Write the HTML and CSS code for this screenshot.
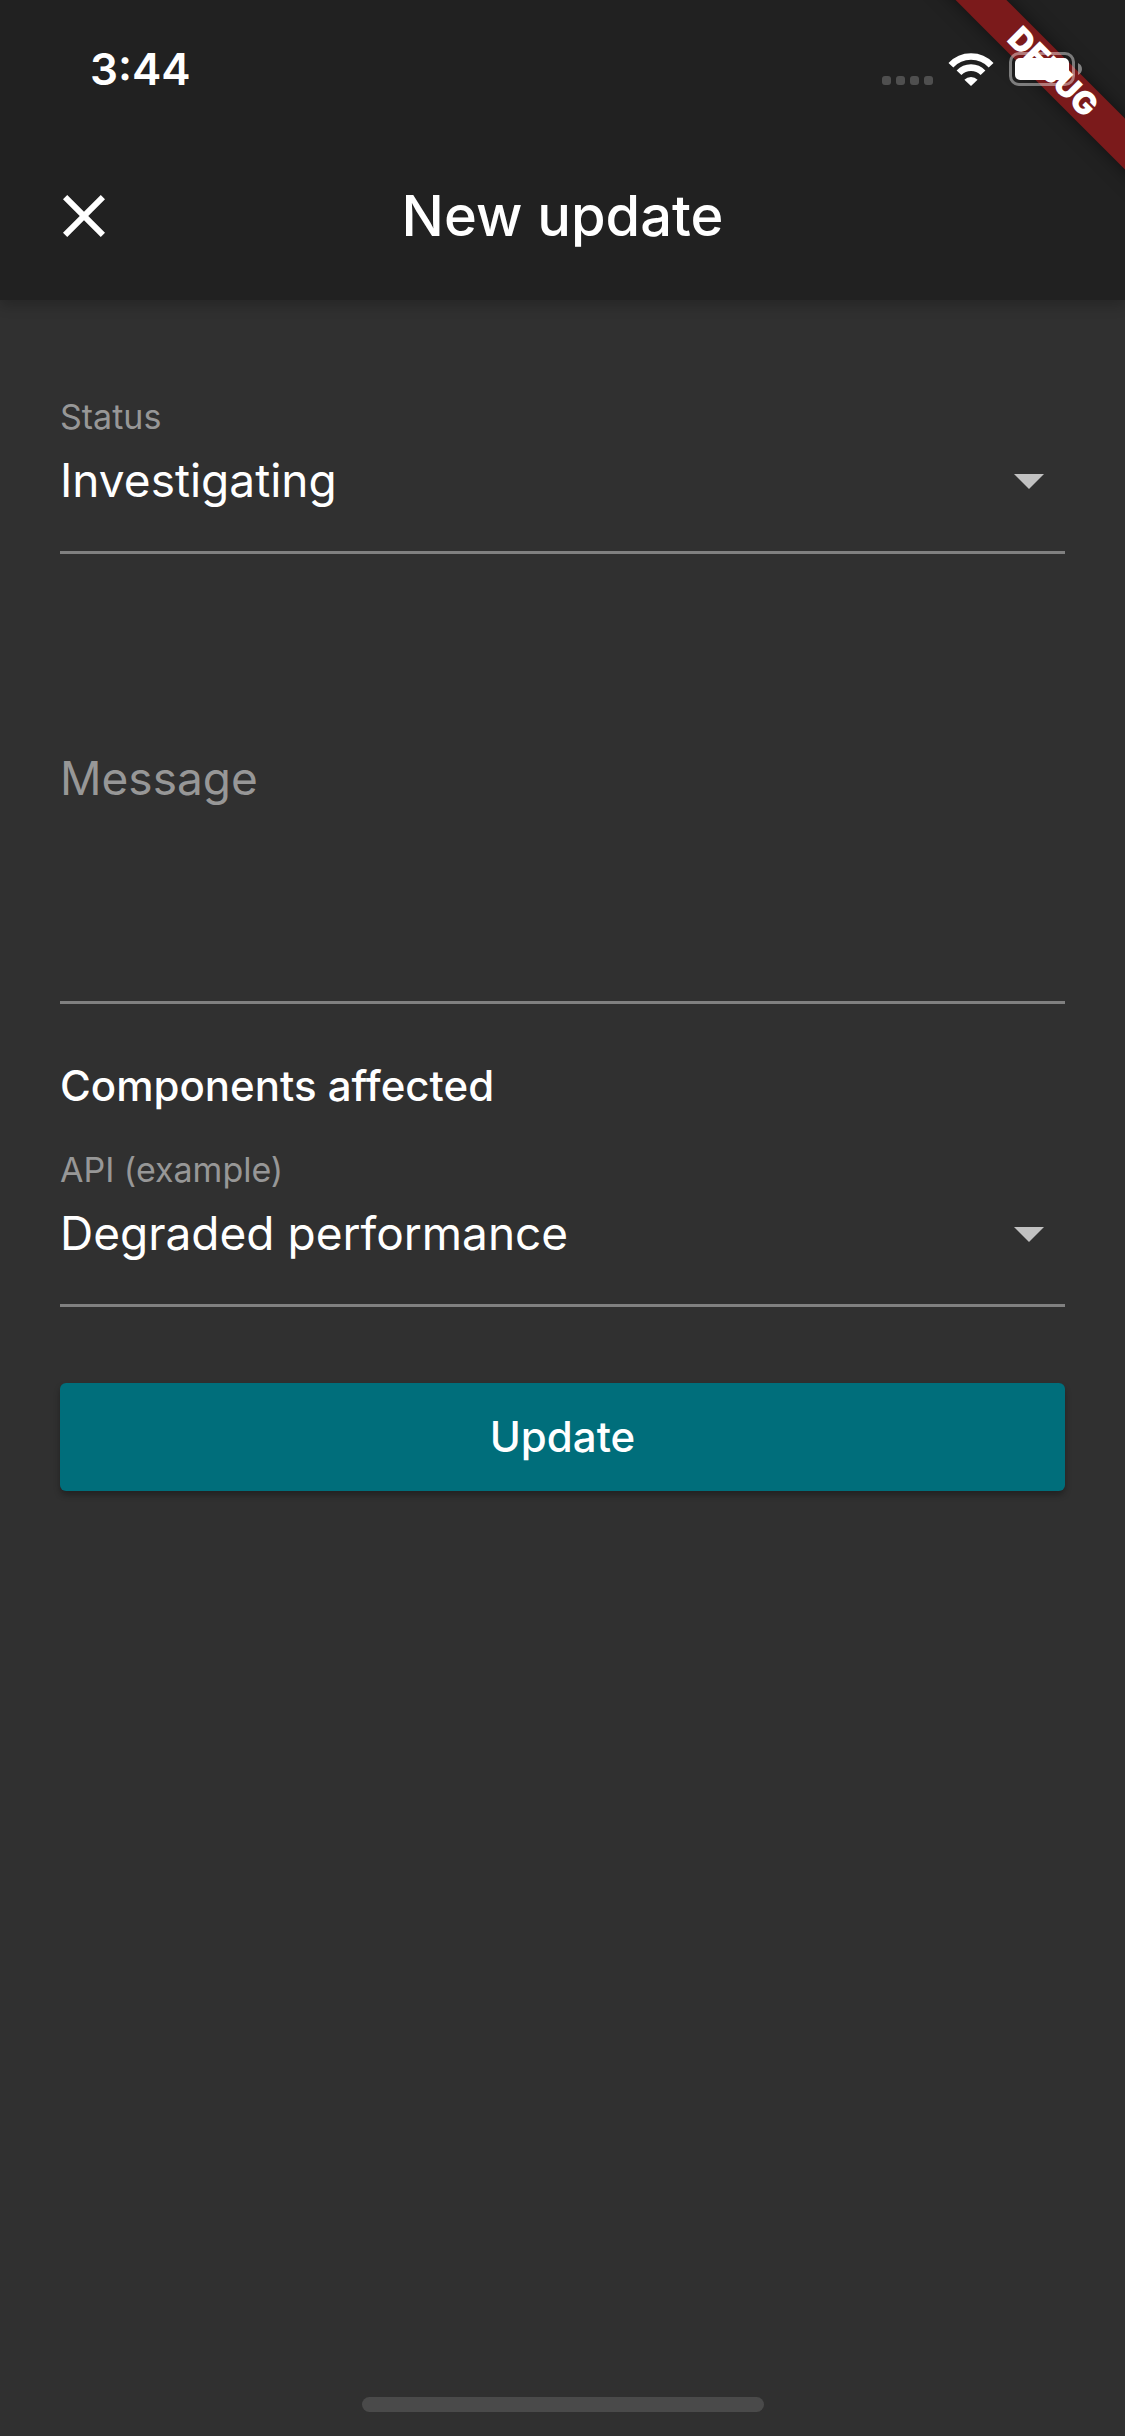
FILE: index.html
```html
<!DOCTYPE html>
<html lang="en">
<head>
  <meta charset="utf-8">
  <meta name="viewport" content="width=device-width, initial-scale=1">
  <title>New update</title>
  <link rel="stylesheet" href="styles.css">
</head>
<body>
  <div class="ribbon-corner"><span class="ribbon">DEBUG</span></div>

  <header class="app-header">
    <div class="status-bar">
      <time class="clock">3:44</time>
      <div class="indicators">
        <svg class="signal" width="51" height="33" viewBox="0 0 51 33" aria-hidden="true">
          <rect x="0" y="23" width="9" height="9" rx="3"/>
          <rect x="14" y="23" width="9" height="9" rx="3"/>
          <rect x="28" y="23" width="9" height="9" rx="3"/>
          <rect x="42" y="23" width="9" height="9" rx="3"/>
        </svg>
        <svg class="wifi" width="46" height="33" viewBox="0 0 46 33" aria-hidden="true">
          <path class="wifi-arc" d="M2.9 12.2A27.5 27.5 0 0 1 43.1 12.2"/>
          <path class="wifi-arc" d="M11 19.8A16.6 16.6 0 0 1 35 19.8"/>
          <path class="wifi-dot" d="M23 33L16.4 26.8A9.2 9.2 0 0 1 29.6 26.8Z"/>
        </svg>
        <svg class="battery" width="74" height="34" viewBox="0 0 74 34" aria-hidden="true">
          <rect class="battery-case" x="1.5" y="1.5" width="63" height="31" rx="8.5"/>
          <rect class="battery-level" x="6" y="6" width="54" height="22" rx="5"/>
          <path class="battery-cap" d="M69 11C74.300 13.500 74.300 20.500 69 23Z"/>
        </svg>
      </div>
    </div>
    <div class="toolbar">
      <button class="close" type="button" aria-label="Close">
        <svg width="72" height="72" viewBox="0 0 24 24" aria-hidden="true">
          <path d="M19 6.410L17.590 5 12 10.590 6.410 5 5 6.410 10.590 12 5 17.590 6.410 19 12 13.410 17.590 19 19 17.590 13.410 12z"/>
        </svg>
      </button>
      <h1 class="title">New update</h1>
    </div>
  </header>

  <main class="content">
    <form class="form">
      <div class="field">
        <label class="field-label" for="status">Status</label>
        <div class="select-row">
          <select class="select" id="status">
            <option selected>Investigating</option>
            <option>Identified</option>
            <option>Monitoring</option>
            <option>Resolved</option>
          </select>
          <svg class="arrow" width="72" height="72" viewBox="0 0 24 24" aria-hidden="true"><path d="M7 10l5 5 5-5z"/></svg>
        </div>
      </div>

      <div class="message-field">
        <textarea class="message" id="message" placeholder=" "></textarea>
        <label class="message-label" for="message">Message</label>
      </div>

      <h2 class="section-title">Components affected</h2>

      <div class="field">
        <label class="field-label" for="component">API (example)</label>
        <div class="select-row">
          <select class="select" id="component">
            <option>Operational</option>
            <option selected>Degraded performance</option>
            <option>Partial outage</option>
            <option>Major outage</option>
          </select>
          <svg class="arrow" width="72" height="72" viewBox="0 0 24 24" aria-hidden="true"><path d="M7 10l5 5 5-5z"/></svg>
        </div>
      </div>

      <button class="submit" type="submit">Update</button>
    </form>
  </main>

  <footer class="home-area"><span class="home-indicator"></span></footer>
</body>
</html>
```

FILE: styles.css
```css
* {
  box-sizing: border-box;
}

body {
  display: flex;
  flex-direction: column;
  position: relative;
  min-height: 100vh;
  margin: 0;
  background: #303030;
  color: #fff;
  font-family: Inter, "Liberation Sans", sans-serif;
}

button,
select,
textarea {
  margin: 0;
  padding: 0;
  border: 0;
  background: none;
  color: inherit;
  font: inherit;
}

/* Header */
.app-header {
  background: #212121;
  box-shadow: 0 6px 12px rgba(0, 0, 0, 0.2);
}

.status-bar {
  display: flex;
  justify-content: space-between;
  align-items: center;
  height: 132px;
  padding: 6px 42px 0 90px;
}

.clock {
  font-size: 44px;
  font-weight: 600;
  line-height: 54px;
}

/* The system indicators stay above the corner ribbon */
.indicators {
  display: flex;
  align-items: center;
  gap: 15px;
  position: relative;
  z-index: 2;
}

.signal {
  fill: #4f4f4f;
}

.wifi-arc {
  fill: none;
  stroke: #fff;
  stroke-width: 6.6;
}

.wifi-dot,
.battery-level {
  fill: #fff;
}

.battery-case {
  fill: none;
  stroke: rgba(255, 255, 255, 0.42);
  stroke-width: 3;
}

.battery-cap {
  fill: rgba(255, 255, 255, 0.45);
}

.toolbar {
  display: grid;
  grid-template-columns: 72px 1fr 72px;
  align-items: center;
  height: 168px;
  padding: 0 48px;
}

.close {
  display: flex;
  fill: #fff;
}

.title {
  margin: 0;
  font-size: 56px;
  font-weight: 500;
  line-height: 72px;
  text-align: center;
}

/* Corner ribbon */
.ribbon-corner {
  position: absolute;
  top: 0;
  right: 0;
  z-index: 1;
  width: 240px;
  height: 240px;
  overflow: hidden;
  pointer-events: none;
}

.ribbon {
  position: absolute;
  top: 54px;
  right: -128px;
  width: 400px;
  background: #7b1a1b;
  box-shadow: 0 0 18px rgba(0, 0, 0, 0.5);
  font-size: 32px;
  font-weight: 900;
  line-height: 36px;
  text-align: center;
  transform: rotate(45deg);
}

/* Form */
.content {
  flex: 1;
  padding: 93px 60px 60px;
}

.form {
  display: flex;
  flex-direction: column;
}

.field {
  display: flex;
  flex-direction: column;
  gap: 3px;
  padding-bottom: 35px;
  border-bottom: 3px solid #808080;
}

.field-label {
  color: #979797;
  font-size: 34px;
  line-height: 48px;
}

.select-row {
  display: grid;
  align-items: center;
}

.select {
  grid-area: 1 / 1;
  height: 72px;
  padding-right: 72px;
  appearance: none;
  font-size: 46px;
}

.select option {
  background: #424242;
}

.arrow {
  grid-area: 1 / 1;
  justify-self: end;
  fill: #c1c1c1;
  pointer-events: none;
}

.message-field {
  display: grid;
  align-items: center;
  border-bottom: 3px solid #808080;
  font-size: 46px;
  line-height: 60px;
}

.message {
  grid-area: 1 / 1;
  height: 447px;
  padding: 72px 0 36px;
  resize: none;
}

.message-label {
  grid-area: 1 / 1;
  justify-self: start;
  color: #979797;
  pointer-events: none;
}

.message:focus + .message-label,
.message:not(:placeholder-shown) + .message-label {
  align-self: start;
  font-size: 34px;
}

.section-title {
  margin: 52px 0 30px;
  font-size: 42px;
  font-weight: 500;
  line-height: 60px;
}

.submit {
  height: 108px;
  margin-top: 76px;
  padding-bottom: 2px;
  border-radius: 6px;
  background: #006e7b;
  box-shadow: 0 4px 6px rgba(0, 0, 0, 0.3);
  font-size: 42px;
  font-weight: 500;
}

/* Home indicator */
.home-area {
  display: flex;
  justify-content: center;
  padding-bottom: 24px;
}

.home-indicator {
  width: 402px;
  height: 15px;
  border-radius: 8px;
  background: #4a4a4a;
}
```
